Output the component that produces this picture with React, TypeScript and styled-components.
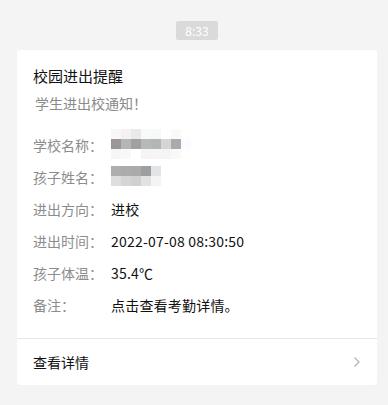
import React from "react";
import styled, { createGlobalStyle } from "styled-components";

const GlobalStyle = createGlobalStyle`
  html, body {
    margin: 0;
    padding: 0;
    background: #f4f4f4;
  }
  body {
    font-family: "Noto Sans CJK SC", "Noto Sans", sans-serif;
    -webkit-font-smoothing: antialiased;
  }
`;

const Page = styled.div`
  width: 388px;
  height: 405px;
  background: #f4f4f4;
  padding: 21px 0 0 6px;
  box-sizing: border-box;
  display: flex;
  flex-direction: column;
  align-items: center;
`;

const TimeBadge = styled.div`
  height: 19px;
  padding: 0 9px;
  border-radius: 2px;
  background: #dadada;
  color: #ffffff;
  font-size: 12px;
  line-height: 19px;
`;

const Card = styled.div`
  margin-top: 10px;
  width: 360px;
  background: #ffffff;
  border-radius: 3px;
`;

const Body = styled.div`
  padding: 16px 16px 17px 16px;
`;

const Title = styled.div`
  font-size: 15px;
  line-height: 20px;
  color: #111111;
`;

const Subtitle = styled.div`
  margin-top: 7px;
  padding-left: 2px;
  font-size: 14px;
  line-height: 20px;
  color: #8a8a8a;
`;

const Fields = styled.div`
  margin-top: 16px;
  display: flex;
  flex-direction: column;
`;

const Field = styled.div`
  display: grid;
  grid-template-columns: 78px 1fr;
  height: 32px;
  align-items: center;
  font-size: 14px;
`;

const Label = styled.div`
  color: #8c8c8c;
`;

const Value = styled.div`
  color: #111111;
  letter-spacing: 0.2px;
`;

const Mosaic = styled.div<{ cols: number }>`
  display: grid;
  grid-template-columns: repeat(${({ cols }) => cols}, 10px);
  grid-auto-rows: 10px;
  margin-top: -3px;
`;

const Cell = styled.div<{ c: string }>`
  background: ${({ c }) => c};
`;

const Footer = styled.div`
  border-top: 1px solid #e6e6e6;
  height: 46px;
  padding: 0 16px;
  display: flex;
  align-items: center;
  justify-content: space-between;
  font-size: 14px;
  color: #111111;
`;

const schoolCells = [
  ["#f7f7f7", "#f4f2f0", "#e8e9eb", "#f9f9f9", "#f7f8f8", "#ffffff", "#f9f9f9", "#ffffff"],
  ["#9c9697", "#b4b5b8", "#a1a0a2", "#b7b8b8", "#b3b6b8", "#d6d5d3", "#aba9ab", "#fbfcff"],
  ["#f6f6f6", "#f8f8f8", "#ffffff", "#f5f5f5", "#f6f6f6", "#f4f4f4", "#f9f9f9", "#ffffff"],
];

const nameCells = [
  ["#aeaeac", "#acacac", "#ababab", "#9e9e9e", "#e1e5e8"],
  ["#dededc", "#d5d5d5", "#cfd0d2", "#e2e2e0", "#f3f4f4"],
];

function Pixelated({ rows }: { rows: string[][] }) {
  return (
    <Mosaic cols={rows[0].length}>
      {rows.flat().map((c, i) => (
        <Cell key={i} c={c} />
      ))}
    </Mosaic>
  );
}

export default function App() {
  return (
    <Page>
      <GlobalStyle />
      <TimeBadge>8:33</TimeBadge>
      <Card>
        <Body>
          <Title>校园进出提醒</Title>
          <Subtitle>学生进出校通知！</Subtitle>
          <Fields>
            <Field>
              <Label>学校名称：</Label>
              <Pixelated rows={schoolCells} />
            </Field>
            <Field>
              <Label>孩子姓名：</Label>
              <Pixelated rows={nameCells} />
            </Field>
            <Field>
              <Label>进出方向：</Label>
              <Value>进校</Value>
            </Field>
            <Field>
              <Label>进出时间：</Label>
              <Value>2022-07-08 08:30:50</Value>
            </Field>
            <Field>
              <Label>孩子体温：</Label>
              <Value>35.4℃</Value>
            </Field>
            <Field>
              <Label>备注：</Label>
              <Value>点击查看考勤详情。</Value>
            </Field>
          </Fields>
        </Body>
        <Footer>
          <span>查看详情</span>
          <svg width="8" height="12" viewBox="0 0 8 12">
            <path d="M1.5 1.5 L6 6 L1.5 10.5" fill="none" stroke="#b4b4b4" strokeWidth="1.3" />
          </svg>
        </Footer>
      </Card>
    </Page>
  );
}
